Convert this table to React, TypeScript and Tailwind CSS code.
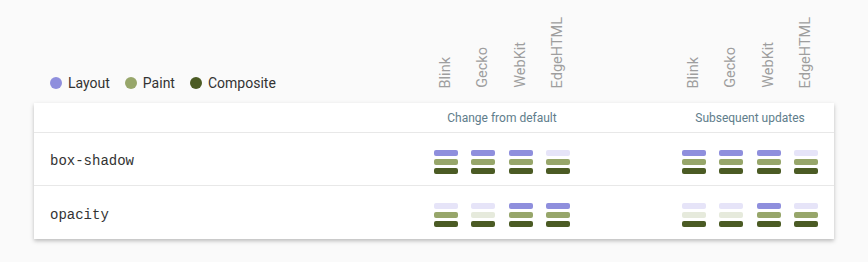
import React from 'react';

type Level = 0 | 1; // 0 = not triggered (faded), 1 = triggered
type Cell = [Level, Level, Level];

interface Row {
  name: string;
  initial: Cell[];
  change: Cell[];
}

const engines = ['Blink', 'Gecko', 'WebKit', 'EdgeHTML'];

const rows: Row[] = [
  {
    name: 'box-shadow',
    initial: [[1, 1, 1], [1, 1, 1], [1, 1, 1], [0, 1, 1]],
    change: [[1, 1, 1], [1, 1, 1], [1, 1, 1], [0, 1, 1]],
  },
  {
    name: 'opacity',
    initial: [[0, 1, 1], [0, 0, 1], [1, 1, 1], [1, 1, 1]],
    change: [[0, 0, 1], [0, 0, 1], [1, 1, 1], [0, 1, 1]],
  },
];

const barColors = [
  ['bg-[#e6e4f8]', 'bg-[#8f8fdd]'],
  ['bg-[#e6eadc]', 'bg-[#97a66a]'],
  ['bg-[#4b5b24]', 'bg-[#4b5b24]'],
];

const Bars: React.FC<{ cell: Cell }> = ({ cell }) => (
  <div className="w-[24px] flex flex-col gap-[3px]">
    {cell.map((lvl, i) => (
      <div key={i} className={`h-[6px] rounded-[2px] ${barColors[i][lvl]}`} />
    ))}
  </div>
);

const Group: React.FC<{ cells: Cell[] }> = ({ cells }) => (
  <div className="w-[136px] flex justify-between">
    {cells.map((c, i) => (
      <Bars key={i} cell={c} />
    ))}
  </div>
);

const EngineLabels: React.FC = () => (
  <div className="w-[136px] flex justify-between items-end">
    {engines.map(e => (
      <div key={e} className="w-[24px] flex justify-center">
        <span className="[writing-mode:vertical-rl] rotate-180 text-[14.5px] leading-[16px] text-[#9e9e9e]">{e}</span>
      </div>
    ))}
  </div>
);

export default function App() {
  return (
    <div className="min-h-[262px] bg-[#fafafa] font-['Roboto',sans-serif]">
      <div className="ml-[34px] w-[800px]">
        {/* Header: legend + engine labels */}
        <div className="h-[103px] px-4 flex items-end">
          <div className="w-[384px] flex items-center gap-[15px] mb-[10px] h-[20px] text-[14px] font-normal text-[#333]">
            <span className="flex items-center gap-[6px]">
              <span className="w-[12px] h-[12px] rounded-full bg-[#8f8fdd]" />Layout
            </span>
            <span className="flex items-center gap-[6px]">
              <span className="w-[12px] h-[12px] rounded-full bg-[#97a66a]" />Paint
            </span>
            <span className="flex items-center gap-[6px]">
              <span className="w-[12px] h-[12px] rounded-full bg-[#4b5b24]" />Composite
            </span>
          </div>
          <div className="flex mb-[15px]">
            <EngineLabels />
            <div className="w-[112px]" />
            <EngineLabels />
          </div>
        </div>

        {/* Card */}
        <div className="bg-white shadow-[0_2px_4px_rgba(0,0,0,0.25)]">
          <div className="h-[30px] px-4 flex items-center border-b border-[#e8e8e8] text-[12px] text-[#607d8b]">
            <div className="w-[384px]" />
            <div className="w-[136px] text-center">Change from default</div>
            <div className="w-[112px]" />
            <div className="w-[136px] text-center">Subsequent updates</div>
          </div>
          {rows.map((r, i) => (
            <div
              key={r.name}
              className={`h-[53px] pt-[5px] px-4 flex items-center ${i < rows.length - 1 ? 'border-b border-[#e8e8e8]' : ''}`}
            >
              <div className="w-[384px] font-['Liberation_Mono',monospace] text-[14px] text-[#333]">{r.name}</div>
              <Group cells={r.initial} />
              <div className="w-[112px]" />
              <Group cells={r.change} />
            </div>
          ))}
        </div>
      </div>
    </div>
  );
}
